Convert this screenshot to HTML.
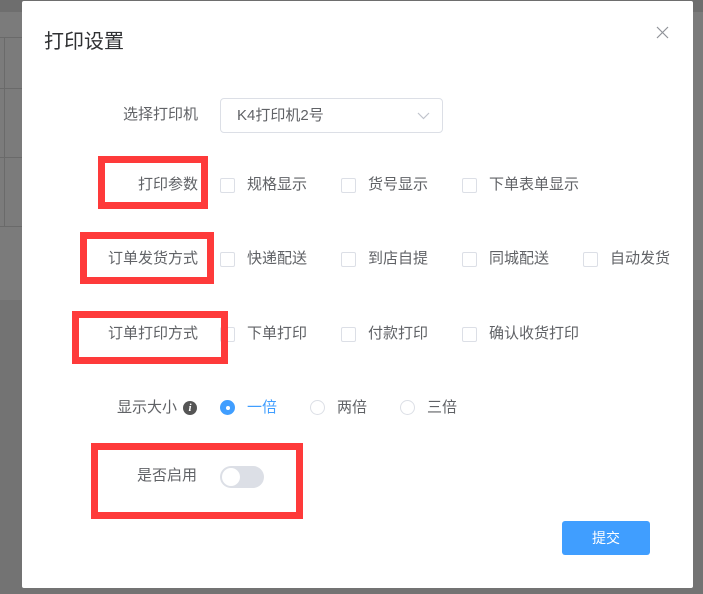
<!DOCTYPE html>
<html><head><meta charset="utf-8"><style>
body{margin:0;width:703px;height:594px;position:relative;overflow:hidden;background:#7b7b7b;font-family:"Liberation Sans","Noto Sans CJK SC",sans-serif;}
.a{position:absolute}
.t{position:absolute;font-size:15px;color:#606266;line-height:20px;white-space:nowrap}
.lbl{text-align:right;width:120px}
.cb{position:absolute;width:13px;height:13px;border:1px solid #dcdfe6;border-radius:2px;background:#fff}
.rb{position:absolute;width:13px;height:13px;border:1px solid #dcdfe6;border-radius:50%;background:#fff}
.red{position:absolute;border:7px solid #fe3a3a;box-sizing:border-box}
</style></head><body>
<div class="a" style="left:0;top:0;width:703px;height:12px;background:#6e6e6e"></div>
<div class="a" style="left:0;top:37px;width:22px;height:1px;background:#6a6a6a"></div>
<div class="a" style="left:0;top:88px;width:22px;height:1px;background:#6a6a6a"></div>
<div class="a" style="left:0;top:157px;width:22px;height:1px;background:#6a6a6a"></div>
<div class="a" style="left:0;top:226px;width:22px;height:1px;background:#6a6a6a"></div>
<div class="a" style="left:4px;top:37px;width:1px;height:190px;background:#6a6a6a"></div>
<div class="a" style="left:0;top:300px;width:703px;height:294px;background:#737373"></div>
<div class="a" style="left:22px;top:1px;width:671px;height:587px;background:#fff;border-radius:2px"></div>
<div class="a" style="left:44px;top:25px;font-size:20px;color:#303133">打印设置</div>
<svg class="a" style="left:656px;top:26px" width="13" height="13"><path d="M1 1L12 12M12 1L1 12" stroke="#909399" stroke-width="1.2"/></svg>

<div class="t lbl" style="left:78px;top:105px">选择打印机</div>
<div class="a" style="left:220px;top:98px;width:221px;height:33px;border:1px solid #dcdfe6;border-radius:4px"></div>
<div class="t" style="left:237px;top:106px">K4打印机2号</div>
<svg class="a" style="left:417px;top:112px" width="13" height="8"><path d="M1 1L6.5 6.5L12 1" stroke="#c0c4cc" fill="none" stroke-width="1.2"/></svg>

<div class="t lbl" style="left:78px;top:175px">打印参数</div>
<div class="cb" style="left:220px;top:178px"></div><div class="t" style="left:247px;top:175px">规格显示</div>
<div class="cb" style="left:341px;top:178px"></div><div class="t" style="left:368px;top:175px">货号显示</div>
<div class="cb" style="left:462px;top:178px"></div><div class="t" style="left:489px;top:175px">下单表单显示</div>

<div class="t lbl" style="left:78px;top:249px">订单发货方式</div>
<div class="cb" style="left:220px;top:252px"></div><div class="t" style="left:247px;top:249px">快递配送</div>
<div class="cb" style="left:341px;top:252px"></div><div class="t" style="left:368px;top:249px">到店自提</div>
<div class="cb" style="left:462px;top:252px"></div><div class="t" style="left:489px;top:249px">同城配送</div>
<div class="cb" style="left:583px;top:252px"></div><div class="t" style="left:610px;top:249px">自动发货</div>

<div class="t lbl" style="left:78px;top:324px">订单打印方式</div>
<div class="cb" style="left:220px;top:327px"></div><div class="t" style="left:247px;top:324px">下单打印</div>
<div class="cb" style="left:341px;top:327px"></div><div class="t" style="left:368px;top:324px">付款打印</div>
<div class="cb" style="left:462px;top:327px"></div><div class="t" style="left:489px;top:324px">确认收货打印</div>

<div class="t" style="left:117px;top:398px">显示大小</div>
<div class="a" style="left:183px;top:401px;width:14px;height:14px;border-radius:50%;background:#555;color:#fff;font-size:11px;line-height:14px;text-align:center;font-style:italic;font-weight:bold;font-family:'Liberation Serif',serif">i</div>
<div class="a" style="left:220px;top:400px;width:15px;height:15px;border-radius:50%;background:#409eff"></div>
<div class="a" style="left:225.5px;top:405.5px;width:4px;height:4px;border-radius:50%;background:#fff"></div>
<div class="t" style="left:247px;top:398px;color:#409eff">一倍</div>
<div class="rb" style="left:310px;top:400px"></div><div class="t" style="left:337px;top:398px">两倍</div>
<div class="rb" style="left:400px;top:400px"></div><div class="t" style="left:427px;top:398px">三倍</div>

<div class="t" style="left:137px;top:466px">是否启用</div>
<div class="a" style="left:220px;top:466px;width:44px;height:22px;border-radius:11px;background:#dcdfe6"></div>
<div class="a" style="left:222px;top:468px;width:18px;height:18px;border-radius:50%;background:#fff"></div>

<div class="a" style="left:562px;top:521px;width:88px;height:34px;border-radius:3px;background:#409eff;color:#fff;font-size:14px;line-height:34px;text-align:center">提交</div>

<div class="red" style="left:98px;top:156px;width:110px;height:53px"></div>
<div class="red" style="left:80px;top:232px;width:134px;height:52px"></div>
<div class="red" style="left:72px;top:311px;width:156px;height:53px"></div>
<div class="red" style="left:91px;top:443px;width:212px;height:76px"></div>
</body></html>
